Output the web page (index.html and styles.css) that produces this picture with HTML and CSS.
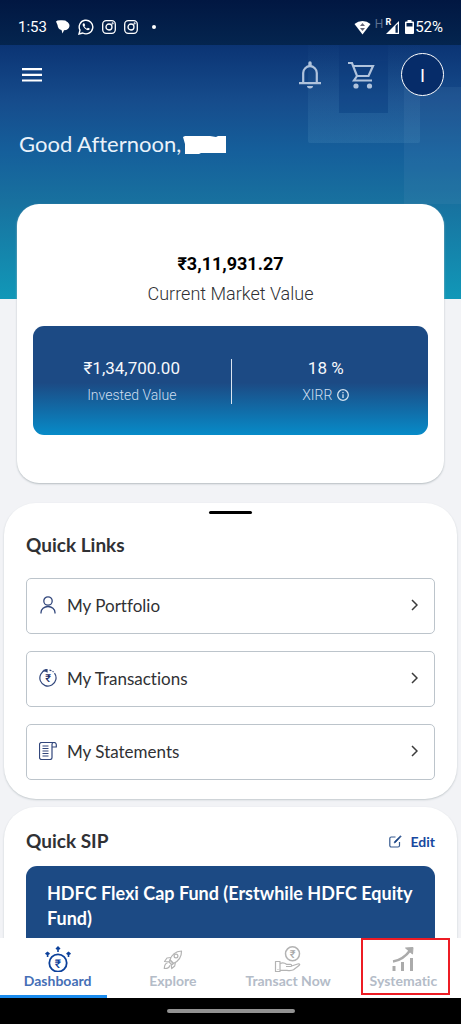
FILE: index.html
```html
<!DOCTYPE html>
<html lang="en">
<head>
<meta charset="utf-8">
<meta name="viewport" content="width=device-width, initial-scale=1">
<title>Dashboard</title>
<link rel="stylesheet" href="styles.css">
</head>
<body>
<div class="screen">
  <div class="statusbar">
    <span class="clock">1:53</span>
    <div class="notices">
      <svg width="14" height="14" viewBox="0 0 14 14" fill="#fff"><path d="M0 1.500Q1 0 6 .3q4 0 4.500 1.200Q13.500 3 13.500 6q-.5 4-5.500 4.300L6.500 13.500 5.500 10Q2 9.500 1.500 5z"/></svg>
      <svg width="16" height="16" viewBox="0 0 16 16" fill="none" stroke="#fff" stroke-width="1.400"><path d="M1 15l1-3.800A6.800 6.800 0 1 1 4.800 14z"/><path d="M5.200 4.300c-.8.800-.9 2 .6 4s3.500 3.300 5 2.800c.9-.4 1-1.200.8-1.500l-1.700-.9-1 1C7.800 9.300 7 8.400 6.400 7.200l.8-.9-.7-1.800z" fill="#fff" stroke="none"/></svg>
      <svg width="14" height="14" viewBox="0 0 14 14" fill="none" stroke="#fff" stroke-width="1.300"><rect x=".7" y=".7" width="12.600" height="12.600" rx="3.500"/><circle cx="7" cy="7" r="3"/><circle cx="10.600" cy="3.400" r=".4"/></svg>
      <svg width="14" height="14" viewBox="0 0 14 14" fill="none" stroke="#fff" stroke-width="1.300"><rect x=".7" y=".7" width="12.600" height="12.600" rx="3.500"/><circle cx="7" cy="7" r="3"/><circle cx="10.600" cy="3.400" r=".4"/></svg>
      <span class="dot"></span>
    </div>
    <div class="signals">
      <svg width="17" height="15" viewBox="0 0 17 15"><path d="M.5 4a12.500 12.500 0 0 1 16 0L8.500 14.500z" fill="#fff"/><path d="M8.500 3l2.500 3H6zM8.500 11L6 8h5z" fill="#667"/></svg>
      <span class="net">H</span>
      <span class="roam">R</span>
      <svg class="bars" width="13" height="14" viewBox="0 0 13 14"><path d="M0 14L13 1v13z" fill="#fff"/><path d="M9.500 6l2.300-2.300v9.100H9.500z" fill="#04224d"/></svg>
      <svg width="9" height="14" viewBox="0 0 9 14"><path d="M2.500 0h4v1.500H8a1 1 0 0 1 1 1V13a1 1 0 0 1-1 1H1a1 1 0 0 1-1-1V2.500a1 1 0 0 1 1-1h1.500z" fill="#fff"/><rect x="1.500" y="3" width="6" height="3.500" fill="#04224d"/></svg>
      <span class="battery">52%</span>
    </div>
  </div>

  <main class="content">
    <svg class="decor" width="153" height="159" viewBox="0 0 153 159">
      <defs><linearGradient id="fade" x1="0" y1="0" x2="0" y2="1"><stop offset="0" stop-color="#5a9bc4" stop-opacity=".02"/><stop offset="1" stop-color="#5a9bc4" stop-opacity=".2"/></linearGradient></defs>
      <path d="M0 0h31v68h49V0h32v96a2 2 0 0 1-2 2H2a2 2 0 0 1-2-2z" fill="url(#fade)"/><path d="M31 16h49v52H31z" fill="#06367a" opacity=".12"/><path d="M96 42h57v117H96z" fill="#6f9cc8" opacity=".12"/></svg>
    <header class="appbar">
      <button class="icon-btn" aria-label="Menu"><svg width="20" height="14" viewBox="0 0 20 14" fill="#fff"><path d="M0 0h20v2.200H0zM0 5.700h20v2.200H0zM0 11.400h20v2.200H0z"/></svg></button>
      <div class="actions">
        <button class="icon-btn" aria-label="Notifications"><svg width="22" height="28" viewBox="0 0 22 28"><path d="M4.200 21.500V12a6.800 6.800 0 0 1 13.600 0v9.500" fill="none" stroke="#b0c3dc" stroke-width="2.200"/><path d="M0 21h22v2.300H0zM9.300 2a1.700 1.700 0 0 1 3.400 0v4H9.300zM8 25h6a3 2.400 0 0 1-6 0z" fill="#b0c3dc"/></svg></button>
        <button class="icon-btn" aria-label="Cart"><svg width="28" height="28" viewBox="0 0 28 28" fill="none" stroke="#b0c3dc" stroke-width="2.200"><path d="M1 2h4l5 13h11.500L26 5H6.500M10 15l-3 4.500h18"/><circle cx="9" cy="25" r="2.600" fill="#b0c3dc" stroke="none"/><circle cx="22.500" cy="25" r="2.600" fill="#b0c3dc" stroke="none"/></svg></button>
        <button class="avatar" aria-label="Account">I</button>
      </div>
    </header>
    <h1 class="greeting">Good Afternoon, <svg width="43" height="19" viewBox="0 0 43 19"><path d="M0 2l2-1h25l6 1 2-1h8v17H18l-2 1H2L2 9z" fill="#fff"/></svg></h1>

    <section class="value-card">
      <p class="amount">₹3,11,931.27</p>
      <p class="amount-label">Current Market Value</p>
      <dl class="stats">
        <div class="stat"><dd>₹1,34,700.00</dd><dt>Invested Value</dt></div>
        <div class="stat stat-divided"><dd>18 %</dd><dt>XIRR <svg width="12" height="12" viewBox="0 0 12 12" fill="none" stroke="#d5e4f1" stroke-width="1.300"><circle cx="6" cy="6" r="5.300"/><path d="M6 5.200V9M6 3v1.200"/></svg></dt></div>
      </dl>
    </section>

    <section class="sheet links">
      <span class="handle"></span>
      <h2>Quick Links</h2>
      <nav class="link-list">
        <a href="#portfolio" class="link"><svg width="18" height="18" viewBox="0 0 18 18" fill="none" stroke="#32477c" stroke-width="1.300"><circle cx="9" cy="5" r="4.200"/><path d="M2 17.500v-1a7 6 0 0 1 14 0v1"/></svg><span>My Portfolio</span><svg class="chev" width="7" height="12" viewBox="0 0 7 12"><path d="M1 1l5 5-5 5"/></svg></a>
        <a href="#transactions" class="link"><svg width="18" height="18" viewBox="0 0 18 18" fill="none" stroke="#32477c" stroke-width="1.200"><path d="M7 1.100A8.100 8.100 0 1 0 15.500 4.200"/><path d="M10.500 1.100a8 8 0 0 1 4 2" stroke-dasharray="2 1.300"/><path d="M5 1.400l3-1.200v2.600z" fill="#1c2f66"/><text x="9" y="13" class="rupee rupee-navy" font-size="11">₹</text></svg><span>My Transactions</span><svg class="chev" width="7" height="12" viewBox="0 0 7 12"><path d="M1 1l5 5-5 5"/></svg></a>
        <a href="#statements" class="link"><svg width="18" height="18" viewBox="0 0 18 18" fill="none" stroke="#32477c" stroke-width="1.200"><path d="M13 5v10.500a2 2 0 0 1-2 2H2.500a2 2 0 0 1-2-2v-13a2 2 0 0 1 2-2h12.500a2.200 2.200 0 0 1 2.300 2.200V5H13V2.500a2 2 0 0 1 2-2"/><path d="M3.500 4h6M3.500 6.500h6M3.500 9h6M3.500 11.500h6M3.500 14h6"/></svg><span>My Statements</span><svg class="chev" width="7" height="12" viewBox="0 0 7 12"><path d="M1 1l5 5-5 5"/></svg></a>
      </nav>
    </section>

    <section class="sheet sip">
      <div class="sip-head">
        <h2>Quick SIP</h2>
        <a href="#edit" class="edit"><svg width="13" height="13" viewBox="0 0 13 13" fill="none" stroke="#34598f" stroke-width="1.200"><path d="M6.500 2H2.300A1.500 1.500 0 0 0 .8 3.500v7A1.500 1.500 0 0 0 2.300 12H9a1.500 1.500 0 0 0 1.500-1.500V7"/><path d="M5.200 8l.4-1.600L11.500.8l.6.600-5.400 6z" fill="#17438b" stroke-width=".8"/></svg>Edit</a>
      </div>
      <article class="fund">HDFC Flexi Cap Fund (Erstwhile HDFC Equity Fund)</article>
    </section>
  </main>

  <nav class="tabs">
    <a href="#dashboard" class="tab tab-active"><svg width="26" height="26" viewBox="0 0 26 26"><circle cx="13" cy="17" r="8.700" fill="none" stroke="#0c419b" stroke-width="1.800"/><g fill="#0c419b"><path d="M13 0l2.500 2.500-.8 1h-.9V6h-1.600V3.500h-.9l-.8-1zM2.500 5.500L5 7.500l-1 1.200h-.6V11H1.800V8.700h-.7L0 7.500zM23.500 5.500L26 7.500l-1 1.200h-.7V11h-1.600V8.700h-.6l-1-1.200z"/></g><text x="13" y="21.500" class="rupee rupee-blue" font-size="12">₹</text></svg><span>Dashboard</span></a>
    <a href="#explore" class="tab"><svg width="20" height="26" viewBox="0 0 20 26" fill="none" stroke="#b3b3b3" stroke-width="1.200" stroke-linejoin="round"><path d="M7 14c1.500-5 5-8.500 11.500-9 .2 6-3 10-8 12.500z"/><circle cx="13" cy="10" r="1.900"/><path d="M8 11.500l-4 .5-2.500 3.500 4.800.4M12.500 16l-.8 4-3 2.500-.7-4.500M4.500 17c-3 .3-3 3-3.200 5.500 2.500.1 5-.2 5.400-3.200M7 14l3.500 3.500-1.500 1.200L6 16z"/></svg><span>Explore</span></a>
    <a href="#transact" class="tab"><svg width="28" height="26" viewBox="0 0 28 26" fill="none" stroke="#b3b3b3" stroke-width="1.200" stroke-linejoin="round"><circle cx="18.500" cy="7.800" r="7" stroke-width="1.500"/><text x="18.500" y="11.500" class="rupee rupee-grey" font-size="11">₹</text><path d="M1.500 15.500h4.500v10H1.500zM6 17.500c3-1.500 5-.5 6.500.8h4c1.500 0 1.500 2.200 0 2.200h-4.500M17.500 20l7-2.200c1.500 0 1.500 1 .5 1.700l-5.500 4.300c-2 1.200-4.500.8-7 .5H6M3.500 23.500h1"/></svg><span>Transact Now</span></a>
    <a href="#systematic" class="tab tab-marked"><svg width="22" height="26" viewBox="0 0 22 26" fill="none" stroke="#ababab"><path d="M2 25v-5M10.500 25v-9M19.500 25V12" stroke-width="3"/><path d="M1 15.500C8 14.500 14 10 18.500 4" stroke-width="2.600"/><path d="M13.500 2l7.500-.5L20.500 8z" fill="#ababab" stroke-width="1"/></svg><span>Systematic</span></a>
  </nav>
  <div class="gesture"><span></span></div>
</div>
</body>
</html>
```
FILE: styles.css
```css
* { box-sizing: border-box; }

body {
  margin: 0;
  background: #f2f3f6;
  color: #303134;
  font-family: Lato, "Open Sans", sans-serif;
  font-variant-ligatures: none;
}

h1, h2, p, dl, dd { margin: 0; }
a { color: inherit; text-decoration: none; }
button { padding: 0; border: 0; background: none; color: inherit; font: inherit; }
svg { flex: none; }

.screen {
  display: flex;
  flex-direction: column;
  height: 100vh;
  overflow: hidden;
}

/* System status bar */
.statusbar {
  display: flex;
  align-items: center;
  flex: none;
  height: 45px;
  padding: 9px 18px 0;
  background: linear-gradient(#011742, #04254f);
  color: #fff;
  font: 15px Roboto, sans-serif;
}
.clock { margin-right: 9px; }
.notices { display: flex; align-items: center; gap: 8px; }
.dot { width: 4px; height: 4px; margin-left: 6px; border-radius: 50%; background: #fff; }
.signals { display: flex; align-items: center; margin-left: auto; }
.net { margin: 0 2px 6px 4px; color: #5c7090; font-size: 12px; }
.roam { margin-bottom: 11px; font-size: 9px; font-weight: 700; }
.bars { margin: 0 6px 0 -5px; }
.battery { margin-left: 1px; }

/* Scrolling area */
.content {
  position: relative;
  flex: 1;
  min-height: 0;
  overflow: hidden;
  background: linear-gradient(#0b3474, #164c8c 22%, #155f9b 42%, #18719f 62%, #1198b8) top / 100% 254px no-repeat #f2f3f6;
}
.decor { position: absolute; top: 0; right: 0; }

.appbar {
  position: relative;
  display: flex;
  align-items: center;
  justify-content: space-between;
  padding: 8px 17px 8px 22px;
}
.actions { display: flex; align-items: center; gap: 26px; }
.icon-btn { display: flex; }
.avatar {
  width: 43px;
  height: 43px;
  border: 1px solid #fff;
  border-radius: 50%;
  background: #062c69;
  color: #fff;
  font-size: 18px;
}
.greeting {
  position: relative;
  display: flex;
  align-items: center;
  gap: 2px;
  margin: 27px 19px 47px;
  color: #eaf2fa;
  font-size: 22px;
  font-weight: 400;
  line-height: 26px;
}

.value-card {
  position: relative;
  margin: 0 17px;
  padding: 48px 16px 48px;
  border-radius: 22px;
  background: #fff;
  box-shadow: 0 1px 2px #b5bcc0;
  font-family: Roboto, sans-serif;
  text-align: center;
}
.amount { color: #000; font-size: 18px; font-weight: 700; line-height: 24px; }
.amount-label { margin: 5px 0 20px; font-size: 18px; font-weight: 300; line-height: 25px; }
.stats {
  display: grid;
  grid-template-columns: 1fr 1fr;
  padding: 33px 0 31px;
  border-radius: 11px;
  background: linear-gradient(#1c4a84 52%, #078bc8);
  color: #f5f8fc;
}
.stat { display: flex; flex-direction: column; font-size: 17px; line-height: 18px; }
.stat-divided { padding-right: 8px; border-left: 1px solid #dbe5f0; }
.stat dt {
  display: flex;
  align-items: center;
  justify-content: center;
  gap: 5px;
  margin-top: 9px;
  color: #cfdef0;
  font-size: 14px;
  font-weight: 300;
}

.sheet {
  margin: 0 4px;
  padding: 0 22px;
  background: #fff;
  box-shadow: 0 1px 2px #c3c9cd;
}
.sheet h2 { font-size: 19px; font-weight: 700; line-height: 24px; }

.links { margin-top: 20px; padding: 8px 22px 19px; border-radius: 32px; }
.handle { display: block; width: 43px; height: 3px; margin: 0 auto 19px; border-radius: 2px; background: #000; }
.link-list { display: grid; gap: 17px; margin-top: 21px; }
.link {
  display: flex;
  align-items: center;
  gap: 10px;
  height: 56px;
  padding: 0 16px 2px 12px;
  border: 1px solid #bcc4cb;
  border-radius: 5px;
  font-size: 17px;
}
.chev { margin-left: auto; fill: none; stroke: #3b3b3b; stroke-width: 1.5; }

.rupee { font-family: Roboto, sans-serif; font-weight: 500; text-anchor: middle; stroke: none; }
.rupee-navy { fill: #1c2f66; }
.rupee-blue { fill: #0c419b; }
.rupee-grey { fill: #a8a8a8; }

.sip { margin-top: 8px; padding-top: 22px; border-radius: 32px 32px 0 0; }
.sip-head { display: flex; align-items: center; justify-content: space-between; }
.edit { display: flex; align-items: center; gap: 8px; color: #1748a0; font-size: 14px; font-weight: 700; }
.fund {
  margin-top: 13px;
  padding: 15px 20px 64px 21px;
  border-radius: 11px;
  background: #1c4a84;
  color: #fff;
  font-size: 18px;
  font-weight: 700;
  line-height: 25px;
}

/* Bottom navigation */
.tabs { display: grid; grid-template-columns: repeat(4, 1fr); flex: none; background: #fff; }
.tab {
  display: flex;
  flex-direction: column;
  align-items: center;
  height: 60px;
  padding-top: 8px;
  color: #b4bcc8;
  font-size: 14px;
  font-weight: 700;
  line-height: 18px;
}
.tab-active { margin-right: 8px; padding-left: 8px; border-bottom: 3px solid #1b8cee; color: #456fb6; }
.tab-marked { height: 57px; margin: 0 11px 0 15px; padding: 6px 4px 0 0; border: 2px solid #ed1c24; }

.gesture { display: flex; align-items: center; justify-content: center; flex: none; height: 26px; background: #000; }
.gesture span { width: 128px; height: 4px; border-radius: 2px; background: #929292; }
```
